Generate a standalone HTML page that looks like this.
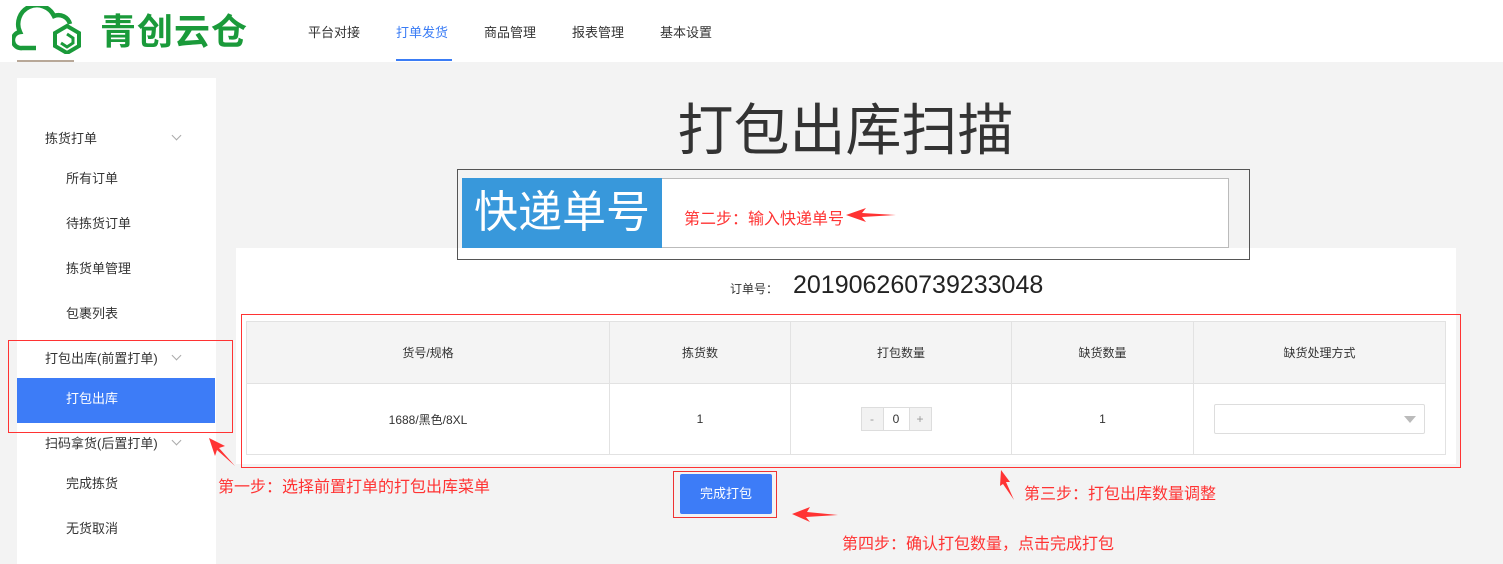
<!DOCTYPE html>
<html><head><meta charset="utf-8"><style>
*{margin:0;padding:0;box-sizing:border-box}
body{width:1503px;height:564px;overflow:hidden;background:#f3f3f3;font-family:"Liberation Sans","Noto Sans CJK SC",sans-serif;position:relative;color:#333}
.abs{position:absolute}
.hdr{left:0;top:0;width:1503px;height:62px;background:#fff}
.nav{top:22px;font-size:13px;color:#333}
.side{left:17px;top:78px;width:199px;height:486px;background:#fff}
.si{position:absolute;font-size:13px;color:#333}
.chev{position:absolute;width:7px;height:7px;border-right:1px solid #aaa;border-bottom:1px solid #aaa;transform:rotate(45deg)}
.red{color:#f33;font-size:16px}
table{border-collapse:collapse;font-size:12px;color:#333}
td{border:1px solid #e2e2e2;text-align:center}
</style></head><body>
<div class="abs hdr"></div>
<svg class="abs" style="left:12px;top:6px" width="75" height="48" viewBox="0 0 75 48">
<path d="M24 42 H10 A8 8 0 0 1 8 26 A18 18 0 0 1 42 10 A12 12 0 0 1 58 18" fill="none" stroke="#1a9a3a" stroke-width="4.5"/>
<path d="M55 20 L67 27 L67 40 L55 47 L43 40 L43 27 Z" fill="none" stroke="#1a9a3a" stroke-width="4"/>
<path d="M55 28 L61 32 L61 37 L55 41 L49 37" fill="none" stroke="#1a9a3a" stroke-width="3"/>
</svg>
<div class="abs" style="left:100px;top:10px;font-size:36px;font-weight:bold;color:#1a9a3a;letter-spacing:1px;line-height:44px">青创云仓</div>
<div class="abs" style="left:17px;top:60px;width:57px;height:2px;background:#b8a898"></div>
<div class="abs nav" style="left:308px">平台对接</div>
<div class="abs nav" style="left:396px;color:#3a7cf5">打单发货</div>
<div class="abs" style="left:396px;top:59px;width:56px;height:2px;background:#3a7cf5"></div>
<div class="abs nav" style="left:484px">商品管理</div>
<div class="abs nav" style="left:572px">报表管理</div>
<div class="abs nav" style="left:660px">基本设置</div>

<div class="abs side"></div>
<div class="si" style="left:45px;top:128px">拣货打单</div><div class="chev" style="left:173px;top:132px"></div>
<div class="si" style="left:66px;top:168px">所有订单</div>
<div class="si" style="left:66px;top:213px">待拣货订单</div>
<div class="si" style="left:66px;top:258px">拣货单管理</div>
<div class="si" style="left:66px;top:303px">包裹列表</div>
<div class="si" style="left:45px;top:348px">打包出库(前置打单)</div><div class="chev" style="left:173px;top:352px"></div>
<div class="abs" style="left:17px;top:378px;width:198px;height:45px;background:#3d7cf7"></div>
<div class="si" style="left:66px;top:388px;color:#fff">打包出库</div>
<div class="si" style="left:45px;top:433px">扫码拿货(后置打单)</div><div class="chev" style="left:173px;top:437px"></div>
<div class="si" style="left:66px;top:473px">完成拣货</div>
<div class="si" style="left:66px;top:518px">无货取消</div>
<div class="abs" style="left:8px;top:340px;width:225px;height:93px;border:1px solid #f33"></div>

<div class="abs" style="left:0;top:96px;width:1503px;text-align:center;font-size:56px;color:#333;line-height:70px;padding-left:188px">打包出库扫描</div>
<div class="abs" style="left:236px;top:248px;width:1220px;height:216px;background:#fff"></div>
<div class="abs" style="left:457px;top:169px;width:793px;height:91px;border:1px solid #555"></div>
<div class="abs" style="left:462px;top:178px;width:767px;height:70px;border:1px solid #bbb;background:#fff"></div>
<div class="abs" style="left:462px;top:178px;width:200px;height:70px;background:#3898db;color:#fff;font-size:44px;line-height:70px;text-align:center">快递单号</div>
<div class="abs red" style="left:684px;top:205px">第二步：输入快递单号</div>
<svg class="abs" style="left:846px;top:207px" width="50" height="16"><path d="M0 8 L20 1 L16 6 L50 8 L16 10 L20 15 Z" fill="#f33"/></svg>

<div class="abs" style="left:730px;top:280px;font-size:12px">订单号：</div>
<div class="abs" style="left:793px;top:271px;font-size:25px;color:#222">201906260739233048</div>
<div class="abs" style="left:241px;top:314px;width:1220px;height:154px;border:1px solid #f33"></div>
<table class="abs" style="left:246px;top:321px;width:1200px">
<tr style="height:62px;background:#f4f4f4"><td style="width:363px">货号/规格</td><td style="width:181px">拣货数</td><td style="width:221px">打包数量</td><td style="width:182px">缺货数量</td><td>缺货处理方式</td></tr>
<tr style="height:71px;background:#fff"><td>1688/黑色/8XL</td><td>1</td><td>
<div style="display:inline-flex;border:1px solid #ddd;height:24px;font-size:12px;line-height:22px;margin-left:-10px"><span style="width:21px;background:#f2f2f2;color:#999">-</span><span style="width:27px;border-left:1px solid #ddd;border-right:1px solid #ddd">0</span><span style="width:21px;background:#f2f2f2;color:#999">+</span></div>
</td><td>1</td><td><div style="margin-left:20px;width:211px;height:30px;border:1px solid #ddd;border-radius:2px;position:relative"><div style="position:absolute;right:8px;top:11px;border-left:6px solid transparent;border-right:6px solid transparent;border-top:7px solid #bbb"></div></div></td></tr>
</table>

<div class="abs" style="left:673px;top:471px;width:104px;height:47px;border:1px solid #e33"></div>
<div class="abs" style="left:680px;top:474px;width:92px;height:40px;background:#3d7cf7;border-radius:2px;color:#fff;font-size:13px;line-height:40px;text-align:center">完成打包</div>

<svg class="abs" style="left:207px;top:436px" width="30" height="32"><path d="M2 2 L18 10 L12 12 L28 30 L10 14 L8 20 Z" fill="#f33"/></svg>
<div class="abs red" style="left:218px;top:473px">第一步：选择前置打单的打包出库菜单</div>
<svg class="abs" style="left:998px;top:470px" width="20" height="30"><path d="M3 0 L12 12 L8 12 L16 30 L5 14 L2 16 Z" fill="#f33"/></svg>
<div class="abs red" style="left:1024px;top:480px">第三步：打包出库数量调整</div>
<svg class="abs" style="left:792px;top:505px" width="46" height="18"><path d="M0 9 L18 2 L15 7 L46 10 L14 12 L18 17 Z" fill="#f33"/></svg>
<div class="abs red" style="left:842px;top:530px">第四步：确认打包数量，点击完成打包</div>
</body></html>
